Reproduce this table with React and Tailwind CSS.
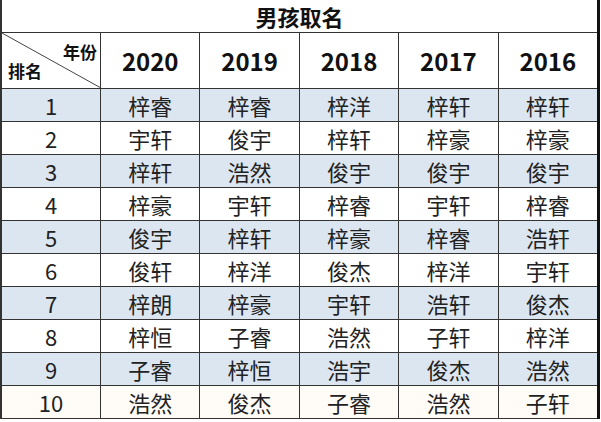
import React from "react";

const years = ["2020", "2019", "2018", "2017", "2016"];
const rows = [
  ["梓睿", "梓睿", "梓洋", "梓轩", "梓轩"],
  ["宇轩", "俊宇", "梓轩", "梓豪", "梓豪"],
  ["梓轩", "浩然", "俊宇", "俊宇", "俊宇"],
  ["梓豪", "宇轩", "梓睿", "宇轩", "梓睿"],
  ["俊宇", "梓轩", "梓豪", "梓睿", "浩轩"],
  ["俊轩", "梓洋", "俊杰", "梓洋", "宇轩"],
  ["梓朗", "梓豪", "宇轩", "浩轩", "俊杰"],
  ["梓恒", "子睿", "浩然", "子轩", "梓洋"],
  ["子睿", "梓恒", "浩宇", "俊杰", "浩然"],
  ["浩然", "俊杰", "子睿", "浩然", "子轩"],
];

const font = { fontFamily: '"Noto Sans CJK SC", "Microsoft YaHei", sans-serif' };

export default function App() {
  return (
    <div className="w-[601px] h-[422px] bg-white overflow-hidden" style={font}>
      <div className="w-[600px] border-l-2 border-r-[3px] border-l-[#333] border-r-[#111] flex flex-col">
        <div className="h-[33px] flex items-center justify-center border-b border-[#333] text-[22px] font-bold text-[#111] leading-none">
          男孩取名
        </div>
        <div className="flex h-[56px] border-b border-[#333]">
          <div className="relative w-[99px] shrink-0 border-r border-[#333]">
            <svg className="absolute inset-0" width="99" height="55" viewBox="0 0 99 55">
              <line x1="0" y1="0" x2="99" y2="55" stroke="#444" strokeWidth="1" />
            </svg>
            <span className="absolute right-[3px] top-[10px] text-[17px] font-bold leading-none text-[#111]">年份</span>
            <span className="absolute left-[6px] top-[29px] text-[17px] font-bold leading-none text-[#111]">排名</span>
          </div>
          {years.map((y, i) => (
            <div
              key={y}
              className={`flex-1 flex items-center justify-center text-[24px] font-bold text-[#111] leading-none ${i < 4 ? "border-r border-[#333]" : ""}`}
            >
              {y}
            </div>
          ))}
        </div>
        {rows.map((r, ri) => (
          <div
            key={ri}
            className={`flex h-[33px] border-b border-[#333] ${ri % 2 === 0 ? "bg-[#dce6f1]" : ri === 9 ? "bg-[#fffcf8]" : "bg-white"}`}
          >
            <div className="w-[99px] shrink-0 border-r border-[#333] flex items-center justify-center text-[22px] text-[#222] leading-none">
              {ri + 1}
            </div>
            {r.map((n, ci) => (
              <div
                key={ci}
                className={`flex-1 flex items-center justify-center text-[22px] text-[#222] leading-none ${ci < 4 ? "border-r border-[#333]" : ""}`}
              >
                {n}
              </div>
            ))}
          </div>
        ))}
      </div>
    </div>
  );
}
